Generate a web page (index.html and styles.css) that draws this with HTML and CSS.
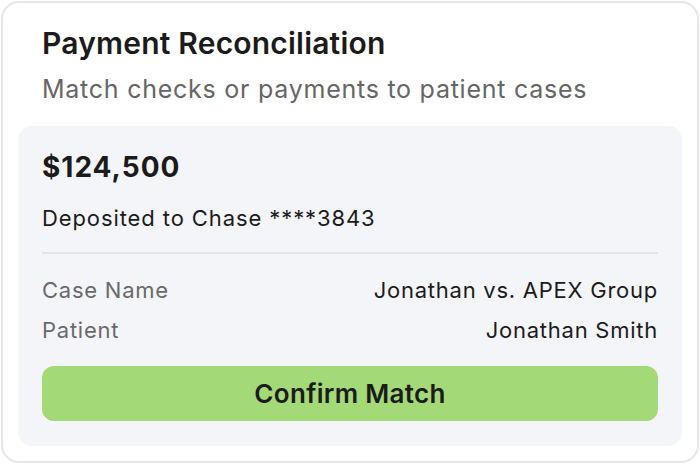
FILE: index.html
```html
<!DOCTYPE html>
<html>
<head>
<meta charset="utf-8">
<link rel="stylesheet" href="styles.css">
</head>
<body>
<div class="card">
  <div class="header">
    <h1 class="title">Payment Reconciliation</h1>
    <p class="subtitle">Match checks or payments to patient cases</p>
  </div>
  <div class="panel">
    <div class="amount">$124,500</div>
    <div class="deposit">Deposited to Chase ****3843</div>
    <div class="divider"></div>
    <div class="rows">
      <div class="row"><span class="label">Case Name</span><span class="value">Jonathan vs. APEX Group</span></div>
      <div class="row"><span class="label">Patient</span><span class="value">Jonathan Smith</span></div>
    </div>
    <button class="confirm">Confirm Match</button>
  </div>
</div>
</body>
</html>
```
FILE: styles.css
```css
* { box-sizing: border-box; }
html, body { margin: 0; padding: 0; background: #ffffff; }
body {
  width: 700px;
  height: 464px;
  padding: 1px;
  font-family: Inter, "Noto Sans", sans-serif;
  color: #1b1b1b;
}
.card {
  height: 462px;
  border: 2px solid #e7e7e7;
  border-radius: 18px;
  background: #ffffff;
  padding: 0 15px 15px 15px;
  display: flex;
  flex-direction: column;
}
.header {
  padding: 22px 24px 0 24px;
  height: 123px;
}
.title {
  margin: 0;
  font-size: 30px;
  font-weight: 600;
  line-height: 36px;
  color: #1b1b1b;
  letter-spacing: 0.2px;
}
.subtitle {
  margin: 0;
  margin-top: 13px;
  font-size: 25px;
  font-weight: 400;
  line-height: 30px;
  color: #666666;
  letter-spacing: 0.75px;
}
.panel {
  flex: 1;
  background: #f4f5f9;
  border-radius: 14px;
  padding: 23px 24px 0 24px;
  display: flex;
  flex-direction: column;
}
.amount {
  font-size: 28px;
  font-weight: 700;
  line-height: 36px;
  color: #1b1b1b;
  letter-spacing: 1px;
}
.deposit {
  margin-top: 18px;
  font-size: 22px;
  line-height: 30px;
  color: #1b1b1b;
  letter-spacing: 0.9px;
}
.divider {
  margin-top: 19px;
  height: 2px;
  background: #e4e5e8;
}
.rows {
  margin-top: 21px;
  display: flex;
  flex-direction: column;
  gap: 10px;
}
.row {
  display: flex;
  justify-content: space-between;
  font-size: 22px;
  line-height: 30px;
  letter-spacing: 0.75px;
}
.label { color: #6a6a6a; }
.value { color: #1b1b1b; }
.confirm {
  margin-top: 21px;
  height: 55px;
  border: none;
  border-radius: 12px;
  background: #a3d977;
  font-family: inherit;
  font-size: 26px;
  font-weight: 600;
  color: #1b1b1b;
  letter-spacing: 0.3px;
}
```
